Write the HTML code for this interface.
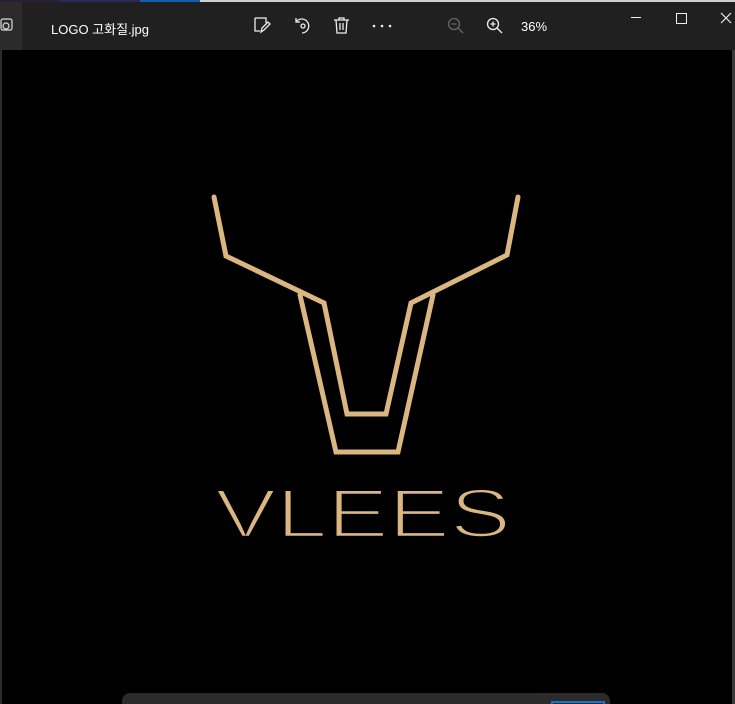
<!DOCTYPE html>
<html><head><meta charset="utf-8"><style>
html,body{margin:0;width:735px;height:704px;overflow:hidden}
body{background:#000;position:relative;font-family:"Liberation Sans","Noto Sans CJK KR",sans-serif}
.top{position:absolute;left:0;top:0;width:735px;height:50px;background:#202020}
.strip{position:absolute;top:0;height:2px}
.side{position:absolute;left:0;top:2px;width:22px;height:48px;background:#2b2b2b}
.t{position:absolute;color:#fff;font-size:13px;top:19px}
.ic{position:absolute;top:14px}
.bot{position:absolute;left:122px;top:693px;width:488px;height:11px;background:#2b2b2b;border-radius:8px 8px 0 0}
</style></head><body>
<div class="top"></div>
<div class="strip" style="left:0;width:60px;background:#2a1d3a"></div>
<div class="strip" style="left:60px;width:80px;background:#2a2a5a"></div>
<div class="strip" style="left:140px;width:60px;background:#1060b0"></div>
<div class="strip" style="left:200px;width:535px;background:#cfcfcf"></div>
<div class="side"></div>
<svg class="ic" style="left:0;top:18px" width="14" height="14" viewBox="0 0 14 14" fill="none" stroke="#ddd" stroke-width="1.2"><rect x="1" y="1" width="11" height="11" rx="2"/><circle cx="6" cy="8" r="3"/></svg>
<div class="t" style="left:51px">LOGO 고화질.jpg</div>
<svg class="ic" style="left:253px;top:16px" width="18" height="18" viewBox="0 0 18 18" fill="none" stroke="#eee" stroke-width="1.3"><path d="M2 2h11v5M2 2v13h5"/><path d="M8 16l1-4 6-6 2 2-6 6z"/></svg>
<svg class="ic" style="left:293px;top:16px" width="18" height="18" viewBox="0 0 18 18" fill="none" stroke="#eee" stroke-width="1.3"><path d="M3 6a7 7 0 1 1 6 11"/><path d="M3 2v4h4"/><circle cx="10" cy="10" r="2"/></svg>
<svg class="ic" style="left:333px;top:16px" width="17" height="18" viewBox="0 0 17 18" fill="none" stroke="#eee" stroke-width="1.3"><path d="M1 4h15M6 4V2h5v2M3 4l1 13h9l1-13M7 7v7M10 7v7"/></svg>
<svg class="ic" style="left:372px;top:24px" width="20" height="4" viewBox="0 0 20 4" fill="#eee"><circle cx="2" cy="2" r="1.3"/><circle cx="10" cy="2" r="1.3"/><circle cx="18" cy="2" r="1.3"/></svg>
<svg class="ic" style="left:447px;top:17px" width="17" height="17" viewBox="0 0 17 17" fill="none" stroke="#666" stroke-width="1.3"><circle cx="7" cy="7" r="5.5"/><path d="M11 11l5 5M4.5 7h5"/></svg>
<svg class="ic" style="left:486px;top:17px" width="17" height="17" viewBox="0 0 17 17" fill="none" stroke="#eee" stroke-width="1.3"><circle cx="7" cy="7" r="5.5"/><path d="M11 11l5 5M4.5 7h5M7 4.5v5"/></svg>
<div class="t" style="left:521px">36%</div>
<div style="position:absolute;left:631px;top:17px;width:10px;height:1px;background:#eee"></div>
<div style="position:absolute;left:676px;top:13px;width:9px;height:9px;border:1px solid #eee"></div>
<svg class="ic" style="left:720px;top:12px" width="12" height="12" viewBox="0 0 12 12" stroke="#eee" stroke-width="1.2"><path d="M1 1l10 10M11 1L1 11"/></svg>
<div style="position:absolute;left:732px;top:50px;width:3px;height:654px;background:#3a3a3a"></div>
<div style="position:absolute;left:0;top:50px;width:2px;height:654px;background:#2b2b2b"></div>
<svg style="position:absolute;left:0;top:0" width="735" height="704">
<g fill="none" stroke="#dcb681" stroke-width="5" stroke-linejoin="miter" stroke-linecap="round">
<path d="M214 197L226 256L324 303L347 414L386 414L411 303L507 255L518 197"/>
<path d="M300 295L336 452L398 452L433 295"/>
</g>
<text x="215" y="537" font-family="Liberation Sans" font-size="69" textLength="296" lengthAdjust="spacingAndGlyphs" fill="#dcb681" stroke="#000" stroke-width="2.6" paint-order="fill">VLEES</text>
</svg>
<div class="bot"></div>
<div style="position:absolute;left:551px;top:701px;width:54px;height:3px;border:2px solid #1a73d0;border-bottom:none;box-sizing:border-box"></div>
</body></html>
